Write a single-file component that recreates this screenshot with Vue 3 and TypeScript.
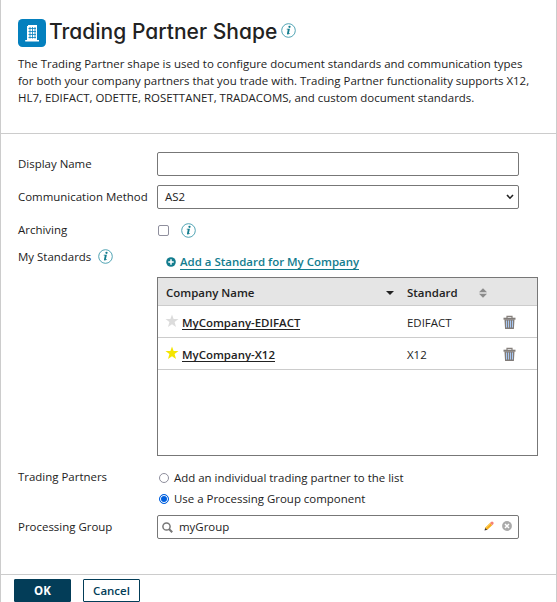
<script setup lang="ts">
import { ref } from 'vue'

interface Company {
  name: string
  standard: string
  preferred: boolean
}

const displayName = ref('')
const method = ref('AS2')
const archiving = ref(false)
const partnerMode = ref('group')
const group = ref('myGroup')
const companies = ref<Company[]>([
  { name: 'MyCompany-EDIFACT', standard: 'EDIFACT', preferred: false },
  { name: 'MyCompany-X12', standard: 'X12', preferred: true },
])
</script>

<template>
  <div class="panel">
    <header class="head">
      <div class="title-row">
        <svg class="logo" width="28" height="28" viewBox="0 0 28 28">
          <rect width="28" height="28" rx="4.5" fill="#0480be" />
          <path d="M10 6h9v15h2v1.600H7.200V21H9V7h1z" fill="#fff" />
          <path d="M10.500 9.500h7.500M10.500 12.500h7.500M10.500 15.500h7.500M10.500 18.500h7.500M12 8v11.500M14.500 8v11.500M17 8v11.500" stroke="#0480be" stroke-width=".8" />
        </svg>
        <h1>Trading Partner Shape</h1>
        <svg class="info" width="15" height="15" viewBox="0 0 15 15">
          <circle cx="7.500" cy="7.500" r="6.800" fill="none" stroke="#3d9aab" stroke-width=".9" />
          <circle cx="8.500" cy="3.800" r="1.150" fill="#127c8e" />
          <path d="M5.800 5.700h3.100L7.800 10.400l1.300-.5-.3.900q-3.300 1.500-2.800-.4l.8-3.900H5.700z" fill="#127c8e" />
        </svg>
      </div>
      <p class="intro">
        The Trading Partner shape is used to configure document standards and communication types<br />
        for both your company partners that you trade with. Trading Partner functionality supports X12,<br />
        HL7, EDIFACT, ODETTE, ROSETTANET, TRADACOMS, and custom document standards.
      </p>
    </header>

    <main class="form">
      <div class="row">
        <label>Display Name</label>
        <input v-model="displayName" class="box" type="text" />
      </div>
      <div class="row method">
        <label>Communication Method</label>
        <div class="box select">
          <span>{{ method }}</span>
          <svg width="8" height="6" viewBox="0 0 8 6"><path d="M1 1l3 3.200L7 1" fill="none" stroke="#222" stroke-width="1.600" /></svg>
        </div>
      </div>
      <div class="row archive">
        <label>Archiving</label>
        <button class="check" :aria-pressed="archiving" @click="archiving = !archiving"></button>
        <svg class="info" width="15" height="15" viewBox="0 0 15 15">
          <circle cx="7.500" cy="7.500" r="6.800" fill="none" stroke="#3d9aab" stroke-width=".9" />
          <circle cx="8.500" cy="3.800" r="1.150" fill="#127c8e" />
          <path d="M5.800 5.700h3.100L7.800 10.400l1.300-.5-.3.900q-3.300 1.500-2.800-.4l.8-3.900H5.700z" fill="#127c8e" />
        </svg>
      </div>
      <div class="standards">
        <label>
          <span>My Standards</span>
          <svg class="info" width="15" height="15" viewBox="0 0 15 15">
            <circle cx="7.500" cy="7.500" r="6.800" fill="none" stroke="#3d9aab" stroke-width=".9" />
            <circle cx="8.500" cy="3.800" r="1.150" fill="#127c8e" />
            <path d="M5.800 5.700h3.100L7.800 10.400l1.300-.5-.3.900q-3.300 1.500-2.800-.4l.8-3.900H5.700z" fill="#127c8e" />
          </svg>
        </label>
        <div class="right">
          <div class="add">
            <svg width="10" height="10" viewBox="0 0 10 10"><circle cx="5" cy="5" r="4.800" fill="#127c8e" /><path d="M5 2.300v5.400M2.300 5h5.400" stroke="#fff" stroke-width="1.500" /></svg>
            <a>Add a Standard for My Company</a>
          </div>
          <div class="table">
            <div class="tr th">
              <div class="name">
                <span>Company Name</span>
                <svg width="8" height="4" viewBox="0 0 8 4"><path d="M0 0h8L4 4z" fill="#222" /></svg>
              </div>
              <div class="std">
                <span>Standard</span>
                <svg width="8" height="10" viewBox="0 0 8 10"><path d="M0 4.200L4 .3l4 3.900zM0 5.800h8L4 9.700z" fill="#8b8b8b" /></svg>
              </div>
            </div>
            <div v-for="c in companies" :key="c.name" class="tr">
              <div class="name">
                <svg class="star" width="14" height="14" viewBox="0 0 14 14">
                  <path d="M7 .5l1.600 4.600h4.900l-3.900 3 1.400 4.900L7 10.200 3 13l1.400-4.900-3.900-3h4.900z" :fill="c.preferred ? '#f4e500' : '#dcdcdc'" />
                </svg>
                <a>{{ c.name }}</a>
              </div>
              <div class="std">
                <span>{{ c.standard }}</span>
              </div>
              <svg class="trash" width="13" height="15" viewBox="0 0 13 15">
                <path d="M4 3V1.300h5V3" fill="none" stroke="#87817d" stroke-width="1.200" />
                <path d="M.5 2.700h12v2H.5z" fill="#817c79" />
                <path d="M1.500 4.500h10l-.6 9.500H2.100z" fill="#807b78" />
                <path d="M3.500 5.500v7M5.500 5.500v7M7.500 5.500v7M9.500 5.500v7" stroke="#a9c8f2" stroke-width="1" />
              </svg>
            </div>
          </div>
        </div>
      </div>
      <div class="partners">
        <label>Trading Partners</label>
        <div class="radios">
          <div class="radio" @click="partnerMode = 'single'">
            <i :class="{ on: partnerMode === 'single' }"></i><span>Add an individual trading partner to the list</span>
          </div>
          <div class="radio" @click="partnerMode = 'group'">
            <i :class="{ on: partnerMode === 'group' }"></i><span>Use a Processing Group component</span>
          </div>
        </div>
      </div>
      <div class="row">
        <label>Processing Group</label>
        <div class="box search">
          <svg width="11" height="11" viewBox="0 0 11 11"><circle cx="4.500" cy="4.500" r="3.600" fill="none" stroke="#777" stroke-width="1.500" /><path d="M7 7l3.200 3.300" stroke="#777" stroke-width="2" /></svg>
          <span>{{ group }}</span>
          <svg class="pencil" width="10" height="10" viewBox="0 0 10 10">
            <path d="M.5 9.500l.8-3L3.500 8.700z" fill="#403530" />
            <path d="M1.100 6.800L6 2l2.200 2.200-4.900 4.600z" fill="#f6ad1b" />
            <path d="M1.700 7L6.500 2.400" stroke="#ffd45a" />
            <path d="M6 2l1-1q1.100-.9 2.100.1t.1 2.100l-1 1z" fill="#f48276" />
          </svg>
          <svg class="clear" width="10" height="10" viewBox="0 0 10 10"><circle cx="5" cy="5" r="4.900" fill="#aaa" /><path d="M3 3l4 4M7 3L3 7" stroke="#fff" stroke-width="1.500" /></svg>
        </div>
      </div>
    </main>

    <footer class="foot">
      <button class="ok">OK</button>
      <button class="cancel">Cancel</button>
    </footer>
  </div>
</template>

<style>
body { margin: 0; background: #fff; overflow: hidden; }
</style>

<style scoped>
* { box-sizing: border-box; }
.panel {
  width: 557px;
  height: 602px;
  overflow: hidden;
  border: solid #ccc;
  border-width: 0 1px;
  background: #fff;
  color: #222;
  font: 11.46px/17px "Open Sans", "Noto Sans", sans-serif;
}
svg { display: block; flex: none; }
.head { height: 134px; padding: 19px 17px 0; border-bottom: 1px solid #ccc; }
.title-row { display: flex; height: 28px; }
h1 {
  width: 228px;
  margin: 0 4px 0 3px;
  font: 500 21px/26px Inter, Lato, sans-serif;
  font-feature-settings: "cv11";
  letter-spacing: .02px;
  white-space: nowrap;
}
.title-row .info { margin-top: 4px; }
.intro { margin: 8px 0 0; white-space: nowrap; }
.form { height: 440px; padding: 18px 17px 0; }
.row { display: flex; align-items: center; height: 24px; }
label { width: 139px; flex: none; white-space: nowrap; }
.row label { padding-bottom: 2px; }
.box {
  width: 362px;
  height: 24px;
  border: 1px solid #777;
  border-radius: 2px;
  background: #fff;
  font: inherit;
  outline: 0;
}
.method { margin-top: 9px; }
.select { display: flex; align-items: center; justify-content: space-between; padding: 0 4px 0 7px; }
.select span { padding-bottom: 2px; }
.archive { margin-top: 9px; }
.check { width: 11px; height: 11px; margin: 0 12px 0 1px; padding: 0; border: 1px solid #8f8f9d; border-radius: 2px; background: #fff; }
.standards { display: flex; margin-top: 6px; }
.standards label { display: flex; height: 17px; gap: 7px; }
.standards label .info { margin-top: 1px; }
.right { width: 381px; padding-top: 6px; }
.add { display: flex; align-items: center; gap: 4px; height: 16px; padding-left: 9px; }
.add a { height: 16px; line-height: 15px; border-bottom: 1px solid #127c8e; color: #127c8e; font-weight: 600; white-space: nowrap; }
.table { height: 179px; margin-top: 7px; border: 1px solid #777; }
.tr { display: flex; align-items: center; height: 32px; padding-top: 2px; border-bottom: 1px solid #ccc; }
.th { height: 28px; background: #e5e5e5; font-weight: 600; }
.name { display: flex; align-items: center; width: 249px; padding-left: 8px; }
.th .name { justify-content: space-between; padding-right: 13px; }
.name a { height: 15px; line-height: 15px; border-bottom: 1px solid #222; font-weight: 600; }
.star { margin: -4px 3px 0 -1px; }
.std { display: flex; align-items: center; justify-content: space-between; width: 80px; }
.trash { margin-left: 16px; }
.partners { display: flex; margin-top: 12px; }
.radios { padding-top: 1px; }
.radio { display: flex; align-items: center; height: 17px; gap: 5px; white-space: nowrap; }
.radio + .radio { margin-top: 4px; }
.radio i { width: 10px; height: 10px; margin-left: 2px; border: 1px solid #8f8f9d; border-radius: 50%; }
.radio i.on { border-color: #0060df; background: #0060df; box-shadow: inset 0 0 0 1px #fff; }
.partners + .row { margin-top: 8px; }
.search { display: flex; align-items: center; padding: 0 6px 0 4px; }
.search span { margin-left: 6px; padding-bottom: 1px; flex: 1; }
.pencil { margin: 0 8px 2px 0; }
.clear { margin-bottom: 2px; }
.foot { display: flex; gap: 12px; height: 28px; padding: 4px 13px 0; border-top: 1px solid #ccc; }
.foot button { width: 57px; height: 23px; padding: 0; border: 1px solid #033d58; border-radius: 1px; background: #fff; color: #033d58; font: 600 11.5px/20px "Open Sans", sans-serif; }
.foot .ok { background: #033d58; color: #fff; font-weight: 700; }
</style>
